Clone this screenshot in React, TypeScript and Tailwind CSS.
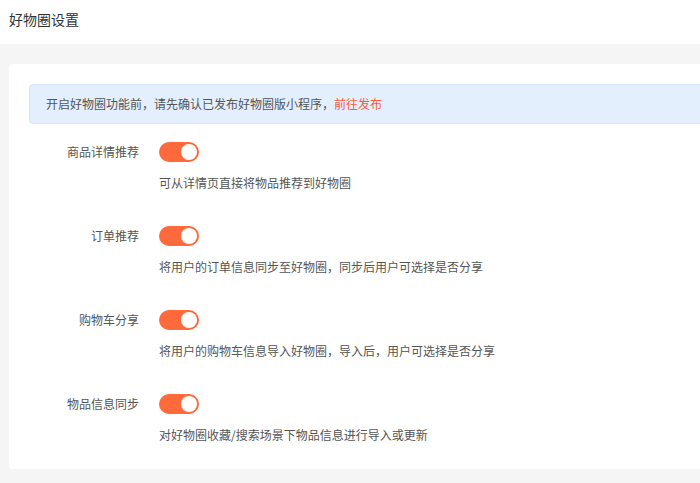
const font = { fontFamily: '"Noto Sans CJK SC", "Liberation Sans", sans-serif' };

const rows = [
  { label: '商品详情推荐', desc: '可从详情页直接将物品推荐到好物圈' },
  { label: '订单推荐', desc: '将用户的订单信息同步至好物圈，同步后用户可选择是否分享' },
  { label: '购物车分享', desc: '将用户的购物车信息导入好物圈，导入后，用户可选择是否分享' },
  { label: '物品信息同步', desc: '对好物圈收藏/搜索场景下物品信息进行导入或更新' },
];

function Toggle() {
  return (
    <div className="w-[40px] h-[20px] rounded-full bg-[#ff6a3c] flex items-center justify-end pr-[2px]">
      <div className="w-[16px] h-[16px] rounded-full bg-white" />
    </div>
  );
}

export default function App() {
  return (
    <div className="w-[700px] h-[483px] overflow-hidden bg-[#f5f5f5]" style={font}>
      <div className="h-[44px] bg-white pl-[9px] pt-[9px] text-[14px] text-[#333]">好物圈设置</div>
      <div className="pt-[20px] pl-[9px]">
        <div className="w-[720px] h-[405px] bg-white rounded-[3px] pt-[20px] pl-[20px]">
          <div className="h-[40px] w-[700px] rounded-[4px] border border-[#d6e6fa] bg-[#e3effd] flex items-center pl-[16px] text-[12px] text-[#555]">
            开启好物圈功能前，请先确认已发布好物圈版小程序，<span className="text-[#ff5a3c]">前往发布</span>
          </div>
          <div className="pt-[18px]">
            {rows.map((r) => (
              <div key={r.label} className="flex h-[84px]">
                <div className="w-[110px] text-right text-[12px] text-[#555] leading-[20px] pt-[-2px]">{r.label}</div>
                <div className="ml-[20px] flex flex-col">
                  <Toggle />
                  <div className="mt-[12px] text-[12px] text-[#555] leading-[18px]">{r.desc}</div>
                </div>
              </div>
            ))}
          </div>
        </div>
      </div>
    </div>
  );
}
